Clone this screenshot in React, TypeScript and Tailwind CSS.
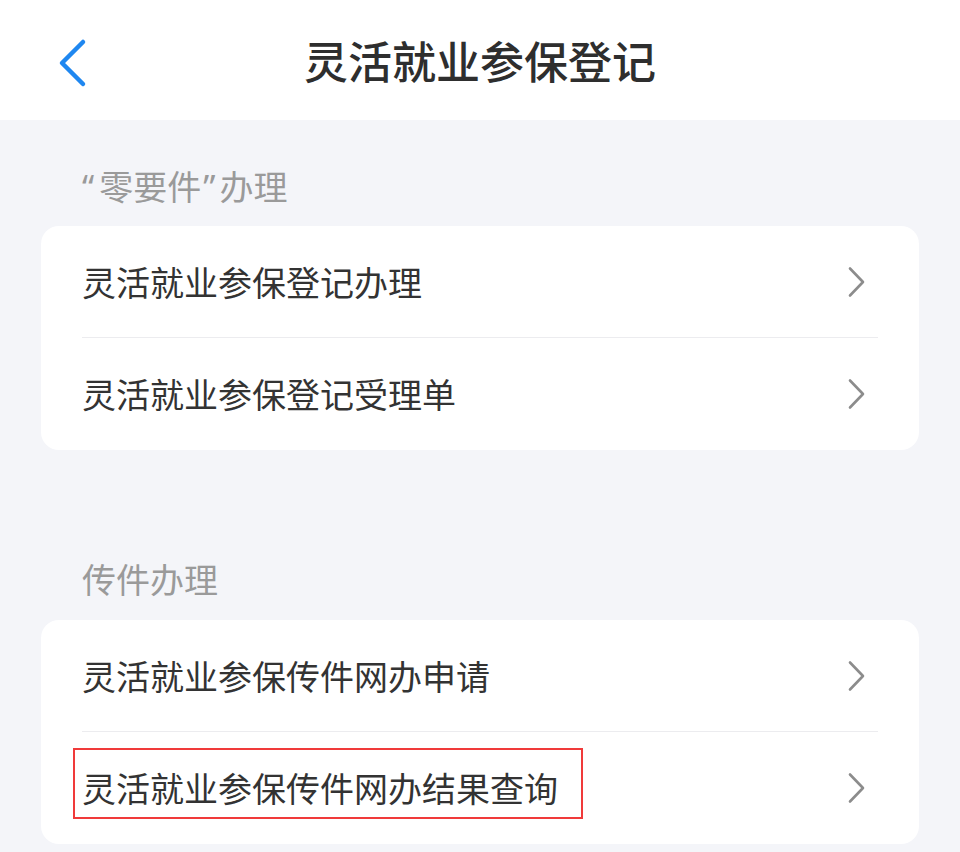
import type { ReactNode } from 'react'

function Chevron() {
  return (
    <svg width="19" height="32" viewBox="0 0 19 32" fill="none" className="mr-[12px]">
      <path d="M3 2.5 L16 16 L3 29.5" stroke="#8c8c8c" strokeWidth="2.6" strokeLinecap="round" strokeLinejoin="round" />
    </svg>
  )
}

function Row({ label, last, children }: { label: ReactNode; last?: boolean; children?: ReactNode }) {
  return (
    <div className={`relative flex h-[112px] items-center justify-between ${last ? '' : 'border-b border-[#ececef]'}`}>
      <span className="text-[34px] leading-none text-[#333333]">{label}</span>
      <Chevron />
      {children}
    </div>
  )
}

export default function App() {
  return (
    <div
      lang="zh-CN"
      className="min-h-screen bg-[#f4f5f9]"
      style={{ fontFamily: '"Noto Sans CJK SC", "Noto Sans", sans-serif' }}
    >
      {/* Header */}
      <div className="relative flex h-[120px] items-center justify-center bg-white">
        <button className="absolute left-[58px] top-[37px]">
          <svg width="30" height="52" viewBox="0 0 30 52" fill="none">
            <path d="M25 5 L4 26 L25 47" stroke="#1f87f0" strokeWidth="4.5" strokeLinecap="round" strokeLinejoin="round" />
          </svg>
        </button>
        <h1 className="text-[44px] font-medium leading-none text-[#2e2e2e]">灵活就业参保登记</h1>
      </div>

      {/* 零要件 */}
      <p className="mt-[46px] mb-[19px] pl-[82px] text-[34px] leading-[40px] text-[#9a9a9a]">
        <span className="pr-[5px] font-['Noto_Sans']">“</span>零要件<span className="pl-[2px] pr-[4px] font-['Noto_Sans']">”</span>办理
      </p>
      <div className="mx-[41px] rounded-[18px] bg-white px-[41px]">
        <Row label="灵活就业参保登记办理" />
        <Row label="灵活就业参保登记受理单" last />
      </div>

      {/* 传件 */}
      <p className="mt-[109px] mb-[21px] pl-[82px] text-[34px] leading-[40px] text-[#9a9a9a]">传件办理</p>
      <div className="mx-[41px] rounded-[18px] bg-white px-[41px]">
        <Row label="灵活就业参保传件网办申请" />
        <Row label="灵活就业参保传件网办结果查询" last>
          <div className="pointer-events-none absolute left-[-9px] top-[16px] h-[71px] w-[510px] border-2 border-[#f03a3a]" />
        </Row>
      </div>
    </div>
  )
}
